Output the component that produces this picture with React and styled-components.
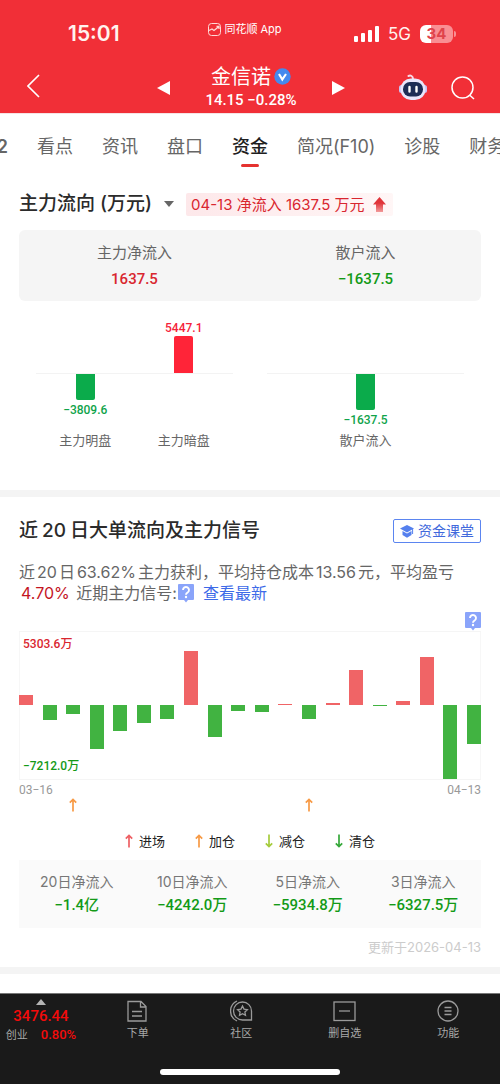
import React from "react";
import styled, { createGlobalStyle } from "styled-components";

const RED = "#f12f37";
const UP = "#d9262f";
const DOWN = "#139a17";
const LINK = "#4169dc";
const TEXT_FONT = `Inter, "Noto Sans CJK SC", sans-serif`;
const NUM_FONT = `Roboto, "Noto Sans CJK SC", sans-serif`;

const GlobalStyle = createGlobalStyle`
  * { box-sizing: border-box; }
  body { margin: 0; background: #fff; font-family: ${TEXT_FONT}; color: #2b2b2b; }
  button { font: inherit; color: inherit; background: none; border: 0; padding: 0; cursor: pointer; }
  h1, h2, p, dl, dd, ul { margin: 0; padding: 0; }
  ul { list-style: none; }
  a { text-decoration: none; color: inherit; }
  svg { display: block; flex: none; }
`;

const Page = styled.div`
  min-height: 100vh;
  display: flex;
  flex-direction: column;
  overflow-x: hidden;
`;

/* ---------- header ---------- */
const Header = styled.header`
  background: ${RED};
  color: #fff;
`;
const StatusBar = styled.div`
  display: grid;
  grid-template-columns: 1fr auto 1fr;
  align-items: center;
  height: 62px;
  padding: 6px 44px 0 34px;
`;
const Time = styled.time`
  padding-left: 34px;
  font-size: 21px;
  font-weight: 600;
  line-height: 26px;
  color: #fff3ee;
`;
const AppTag = styled.div`
  display: flex;
  align-items: center;
  gap: 3px;
  font-size: 11px;
  line-height: 16px;
  padding-bottom: 10px;
`;
const Signals = styled.div`
  display: flex;
  align-items: center;
  justify-content: flex-end;
  gap: 9px;
  font-size: 17px;
  line-height: 20px;
  color: #fff3ee;
`;
const Battery = styled.span`
  display: flex;
  align-items: center;
  gap: 1px;
  &::after {
    content: "";
    width: 2px;
    height: 6px;
    border-radius: 0 2px 2px 0;
    background: #f98f93;
  }
`;
const BatteryBody = styled.span`
  width: 33px;
  height: 18px;
  border-radius: 6px;
  background: linear-gradient(90deg, #fff 34%, #f98f93 34%);
  color: #e0434b;
  font-size: 15px;
  font-weight: 700;
  line-height: 18px;
  text-align: center;
`;
const TitleBar = styled.div`
  display: grid;
  grid-template-columns: 1fr auto 1fr;
  align-items: center;
  height: 51px;
  padding: 0 25px 0 27px;
`;
const Switcher = styled.div`
  display: flex;
  align-items: center;
  gap: 34px;
`;
const Stock = styled.div`
  display: flex;
  flex-direction: column;
  align-items: center;
`;
const StockName = styled.h1`
  display: flex;
  align-items: center;
  gap: 3px;
  font-size: 20px;
  font-weight: 400;
  line-height: 24px;
`;
const StockPrice = styled.p`
  font-family: ${NUM_FONT};
  font-size: 15px;
  font-weight: 500;
  line-height: 22px;
`;
const Actions = styled.div`
  display: flex;
  justify-content: flex-end;
  align-items: center;
  gap: 24px;
`;

/* ---------- tabs ---------- */
const Tabs = styled.nav`
  display: flex;
  justify-content: center;
  gap: 29px;
  padding: 20px 0 0 2px;
  height: 59px;
  overflow: hidden;
  border-top: 1px solid #f6e3e4;
`;
const Tab = styled.a`
  flex: none;
  display: flex;
  flex-direction: column;
  align-items: center;
  gap: 4px;
  font-size: 18px;
  line-height: 26px;
  font-weight: ${(p) => (p.$active ? 500 : 400)};
  color: ${(p) => (p.$active ? "#1f1f1f" : "#666")};
  &::after {
    content: "";
    width: 18px;
    height: 3px;
    border-radius: 2px;
    background: ${(p) => (p.$active ? "#e5322f" : "transparent")};
  }
`;
const EdgeTab = styled(Tab)`
  font-weight: 600;
  &::after { width: 0; }
`;

/* ---------- sections ---------- */
const Section = styled.section`
  padding: ${(p) => p.$pad} 19px 0;
`;
const Divider = styled.div`
  height: 7px;
  background: #f4f4f4;
`;
const HeadRow = styled.div`
  display: flex;
  align-items: center;
  justify-content: ${(p) => (p.$spread ? "space-between" : "flex-start")};
  height: 24px;
`;
const Heading = styled.h2`
  font-size: 19px;
  font-weight: 500;
  line-height: 24px;
  white-space: nowrap;
`;
const Num = styled.span`
  margin: 0 ${(p) => p.$gap || "2px"};
  color: ${(p) => p.$color || "inherit"};
`;
const UnitButton = styled.button`
  display: flex;
  align-items: center;
  gap: 7px;
`;
const FlowTag = styled.span`
  display: flex;
  align-items: center;
  gap: 8px;
  height: 23px;
  margin-left: 12px;
  padding: 0 7px 0 5px;
  border-radius: 2px;
  background: linear-gradient(90deg, #fde8ea, #fff6f6);
  color: ${UP};
  font-size: 15px;
  line-height: 23px;
  white-space: nowrap;
`;
const Card = styled.dl`
  display: grid;
  grid-template-columns: repeat(${(p) => p.$cols}, 1fr);
  text-align: center;
`;
const FlowCard = styled(Card)`
  margin-top: 14px;
  padding: 10px 0 9px;
  border-radius: 6px;
  background: #f5f5f5;
  dt { font-size: 15px; line-height: 26px; color: #666; }
  dd { line-height: 26px; }
`;
const SumCard = styled(Card)`
  margin-top: 9px;
  padding: 11px 0;
  background: #fafafa;
  dt { font-size: 14px; line-height: 22px; color: #777; }
  dd { line-height: 24px; }
`;
const Amount = styled.dd`
  font-family: ${NUM_FONT};
  font-size: 15px;
  font-weight: 500;
  color: ${(p) => (p.$up ? UP : DOWN)};
`;

/* ---------- split bar charts ---------- */
const Panels = styled.div`
  display: grid;
  grid-template-columns: 1fr 1fr;
  padding: 18px 0 40px;
`;
const Panel = styled.div`
  display: flex;
  padding: 0 17px;
`;
const Cell = styled.div`
  flex: 1;
  text-align: center;
  font-size: 13px;
  line-height: 20px;
  color: #666;
`;
const Half = styled.div`
  display: flex;
  flex-direction: column;
  align-items: center;
  justify-content: ${(p) => (p.$upper ? "flex-end" : "flex-start")};
  height: ${(p) => (p.$upper ? "55px" : "56px")};
  border-bottom: ${(p) => (p.$upper ? "1px solid #f3f3f3" : "0")};
  font-family: ${NUM_FONT};
  font-size: 12px;
  font-weight: 500;
  line-height: ${(p) => (p.$upper ? "16px" : "20px")};
  color: ${(p) => (p.$upper ? "#f5223a" : "#0fa34a")};
`;
const Block = styled.div`
  width: 19px;
  height: ${(p) => p.$h}px;
  border-radius: ${(p) => (p.$up ? "2px 2px 0 0" : "0 0 2px 2px")};
  background: ${(p) => (p.$up ? "#ff2438" : "#0bab4b")};
`;

/* ---------- 20-day chart ---------- */
const CourseButton = styled.button`
  display: flex;
  align-items: center;
  gap: 4px;
  height: 24px;
  padding: 0 6px;
  border: 1px solid #5b85f0;
  border-radius: 2px;
  color: ${LINK};
  font-size: 14px;
  line-height: 22px;
`;
const Summary = styled.p`
  margin-top: 19px;
  font-size: 16px;
  line-height: 21px;
  color: #666;
`;
const HelpButton = styled.button`
  vertical-align: top;
  margin: 0 9px 0 1px;
  padding-top: 1px;
`;
const TextLink = styled.a`
  color: #3d6ae8;
`;
const HelpRow = styled.div`
  display: flex;
  justify-content: flex-end;
  height: 19px;
  margin-top: 8px;
`;
const Plot = styled.div`
  position: relative;
  display: flex;
  justify-content: space-between;
  height: 149px;
  border: solid #f5f5f5;
  border-width: 1px 0;
  box-shadow: inset 1px 0 #f7f7f7, inset -1px 0 #f7f7f7;
`;
const Bar = styled.div.attrs((p) => ({
  style: { height: p.$h, marginTop: p.$top },
}))`
  width: 14px;
  background: ${(p) => (p.$up ? "#f06466" : "#41b341")};
`;
const Limit = styled.span`
  position: absolute;
  left: 4px;
  ${(p) => (p.$up ? "top: 3px" : "bottom: 4px")};
  font-family: ${NUM_FONT};
  font-size: 12px;
  font-weight: 500;
  line-height: 18px;
  color: ${(p) => (p.$up ? UP : DOWN)};
`;
const Dates = styled.div`
  display: flex;
  justify-content: space-between;
  padding-top: 2px;
  font-family: ${NUM_FONT};
  font-size: 12px;
  line-height: 16px;
  color: #999;
`;
const Markers = styled.div`
  display: flex;
  justify-content: space-between;
  height: 14px;
`;
const Marker = styled.span`
  display: flex;
  justify-content: center;
  width: 14px;
`;
const Legend = styled.ul`
  display: flex;
  justify-content: center;
  gap: 30px;
  margin-top: 19px;
  font-size: 13px;
  line-height: 20px;
  color: #222;
  li { display: flex; align-items: center; gap: 6px; }
`;
const Updated = styled.p`
  padding: 9px 0 10px;
  text-align: right;
  font-size: 13px;
  line-height: 20px;
  color: #ccc;
`;

/* ---------- bottom bar ---------- */
const Footer = styled.footer`
  margin-top: auto;
  background: #1a1a1a;
  border-top: 1px solid #777;
  color: #a8a8a8;
`;
const FooterRow = styled.div`
  display: flex;
  height: 75px;
  padding-top: 5px;
`;
const IndexBox = styled.button`
  width: 82px;
  height: 46px;
  display: flex;
  flex-direction: column;
  align-items: center;
`;
const IndexValue = styled.span`
  font-family: ${NUM_FONT};
  font-size: 15px;
  font-weight: 500;
  line-height: 22px;
  color: #f40b0b;
`;
const IndexLine = styled.span`
  display: flex;
  gap: 13px;
  font-size: 11px;
  line-height: 16px;
`;
const IndexChange = styled.span`
  font-family: ${NUM_FONT};
  font-size: 13px;
  font-weight: 500;
  color: #f40b0b;
`;
const FooterNav = styled.nav`
  flex: 1;
  display: grid;
  grid-template-columns: repeat(4, 1fr);
  padding: 1px 0 0 4px;
`;
const FooterItem = styled.button`
  display: flex;
  flex-direction: column;
  align-items: center;
  gap: 2px;
  height: 41px;
  font-size: 11px;
  line-height: 16px;
`;
const HomeIndicator = styled.div`
  width: 36%;
  height: 6px;
  margin: 0 auto 9px;
  border-radius: 3px;
  background: #fff;
`;

/* ---------- icons ---------- */
const Arrow = ({ color, down }) => (
  <svg width="8" height="14" viewBox="0 0 8 14" fill="none" stroke={color} strokeWidth="1.7">
    {down ? <path d="M4 .5v12M.8 9.400L4 12.600l3.200-3.200" /> : <path d="M4 13.500v-12M.8 4.600L4 1.400l3.200 3.200" />}
  </svg>
);
const HelpIcon = () => (
  <svg width="16" height="19" viewBox="0 0 16 19">
    <path d="M1 0h14a1 1 0 0 1 1 1v14a1 1 0 0 1-1 1h-5l-2 2.500L6 16H1a1 1 0 0 1-1-1V1a1 1 0 0 1 1-1z" fill="#8aa4fa" />
    <path d="M5 6a3 3 0 1 1 4.600 2.500C8.400 9.200 8 9.600 8 10.700" fill="none" stroke="#fff" strokeWidth="1.900" />
    <circle cx="8" cy="13" r="1.200" fill="#fff" />
  </svg>
);
const Triangle = ({ right }) => (
  <svg width="14" height="14" viewBox="0 0 14 14" fill="#fff">
    <path d={right ? "M1 0v14l13-7z" : "M13 0v14L0 7z"} />
  </svg>
);
const Robot = () => (
  <svg width="28" height="27" viewBox="0 0 28 27">
    <path d="M9.500 2c2-1 4.500 0 4.500 3" fill="none" stroke="#f9d9e6" strokeWidth="2" strokeLinecap="round" />
    <rect x="0" y="11" width="5" height="8" rx="2.500" fill="#c9c3f5" />
    <rect x="23" y="11" width="5" height="8" rx="2.500" fill="#c9c3f5" />
    <rect x="1.500" y="4.500" width="25" height="21.500" rx="10.500" fill="#e9e6fb" />
    <rect x="4" y="8" width="20" height="14.500" rx="7" fill="#1d2c55" />
    <path d="M10.500 13v4.500M17.500 13v4.500" stroke="#fff" strokeWidth="2.400" strokeLinecap="round" />
  </svg>
);

const tabs = ["看点", "资讯", "盘口", "资金", "简况(F10)", "诊股", "财务"];

const days = [
  950, -1490, -830, -4320, -2530, -1750, -1360, 5303.6, -3140, -600,
  -640, 60, -1360, 150, 3450, -50, 430, 4720, -7212, -3800,
];
const ZERO = 73;
const PX_PER_UNIT = 74 / 7212;
const addDays = [2, 12];

const legend = [
  { name: "进场", color: "#ee6064" },
  { name: "加仓", color: "#f79a45" },
  { name: "减仓", color: "#a5cc3c", down: true },
  { name: "清仓", color: "#36a83a", down: true },
];

const totals = [
  ["20日净流入", "−1.4亿"],
  ["10日净流入", "−4242.0万"],
  ["5日净流入", "−5934.8万"],
  ["3日净流入", "−6327.5万"],
];

const line = { fill: "none", stroke: "#9a9a9a", strokeWidth: 1.3 };
const footerItems = [
  ["下单", <g {...line}><path d="M2 1.500h13l5 5v14.500H2z M14.500 1.500v5.500H20 M6 11.500h10M6 16h10" /></g>],
  ["社区", <g {...line}><path d="M18 20H12.500A9 9 0 1 1 21.500 11v9z" /><path d="M7 1A11 11 0 0 0 7 21" /><path d="M12.500 6l1.500 3.100 3.400.5-2.500 2.400.6 3.400-3-1.600-3 1.600.6-3.400-2.500-2.400 3.400-.5z" /></g>],
  ["删自选", <g {...line}><rect x="1" y="2" width="21" height="18.500" /><path d="M6 11h11" /></g>],
  ["功能", <g {...line}><circle cx="11" cy="11" r="10" /><path d="M7.500 7.500h7M7.500 11h7M7.500 14.500h7" /></g>],
];

function Column({ label, value, up, h }) {
  return (
    <Cell>
      <Half $upper>{up && <><span>{value}</span><Block $up $h={h} /></>}</Half>
      <Half>{!up && <><Block $h={h} /><span>{value}</span></>}</Half>
      {label}
    </Cell>
  );
}

export default function App() {
  return (
    <Page>
      <GlobalStyle />
      <Header>
        <StatusBar>
          <Time>15:01</Time>
          <AppTag>
            <svg width="13" height="13" viewBox="0 0 13 13" fill="none" stroke="#ffd9d6" strokeWidth="1">
              <rect x=".5" y=".5" width="12" height="12" rx="3" />
              <path d="M1 7.500l3-1.500 2 1.500 5-4M8.500 3.500H11v2.500" strokeWidth="1.300" />
            </svg>
            同花顺 App
          </AppTag>
          <Signals>
            <svg width="25" height="16" viewBox="0 0 25 16" fill="#fff">
              <rect x="0" y="10" width="4" height="6" rx="1" />
              <rect x="7" y="7" width="4" height="9" rx="1" />
              <rect x="14" y="4" width="4" height="12" rx="1" />
              <rect x="21" y="0" width="4" height="16" rx="1" />
            </svg>
            5G
            <Battery><BatteryBody>34</BatteryBody></Battery>
          </Signals>
        </StatusBar>
        <TitleBar>
          <div>
            <button aria-label="返回">
              <svg width="13" height="24" viewBox="0 0 13 24" fill="none" stroke="#fff" strokeWidth="1.600">
                <path d="M12 1L1 12l11 11" />
              </svg>
            </button>
          </div>
          <Switcher>
            <button aria-label="上一只"><Triangle /></button>
            <Stock>
              <StockName>
                金信诺
                <svg width="17" height="17" viewBox="0 0 17 17">
                  <circle cx="8.500" cy="8.500" r="8.200" fill="#4489ee" />
                  <path d="M5 6l3.300 5.500L12 6" fill="none" stroke="#fff" strokeWidth="2.200" />
                </svg>
              </StockName>
              <StockPrice>14.15 −0.28%</StockPrice>
            </Stock>
            <button aria-label="下一只"><Triangle right /></button>
          </Switcher>
          <Actions>
            <button aria-label="智能助手"><Robot /></button>
            <button aria-label="搜索">
              <svg width="24" height="24" viewBox="0 0 24 24" fill="none" stroke="#fff" strokeWidth="1.500">
                <circle cx="11.500" cy="11.500" r="10.500" />
                <path d="M18.500 19l4.500 4" />
              </svg>
            </button>
          </Actions>
        </TitleBar>
      </Header>

      <Tabs>
        <EdgeTab href="#l2">2</EdgeTab>
        {tabs.map((t) => (
          <Tab key={t} href={`#${t}`} $active={t === "资金"}>{t}</Tab>
        ))}
      </Tabs>

      <Section $pad="20px">
        <HeadRow>
          <Heading>
            <UnitButton>
              <span>主力流向<Num $gap="5px">(万元)</Num></span>
              <svg width="10" height="6" viewBox="0 0 10 6" fill="#666"><path d="M0 0h10L5 6z" /></svg>
            </UnitButton>
          </Heading>
          <FlowTag>
            04-13 净流入 1637.5 万元
            <svg width="13" height="15" viewBox="0 0 13 15">
              <defs>
                <linearGradient id="rise" x1="0" y1="0" x2="0" y2="1">
                  <stop offset=".4" stopColor="#e0343a" />
                  <stop offset="1" stopColor="#f29a9a" />
                </linearGradient>
              </defs>
              <path d="M6.500 0L13 7.500H10V15H3V7.500H0z" fill="url(#rise)" />
            </svg>
          </FlowTag>
        </HeadRow>
        <FlowCard $cols={2}>
          <div><dt>主力净流入</dt><Amount $up>1637.5</Amount></div>
          <div><dt>散户流入</dt><Amount>−1637.5</Amount></div>
        </FlowCard>
        <Panels>
          <Panel>
            <Column label="主力明盘" value="−3809.6" h={26} />
            <Column label="主力暗盘" value="5447.1" up h={37} />
          </Panel>
          <Panel>
            <Column label="散户流入" value="−1637.5" h={37} />
          </Panel>
        </Panels>
      </Section>

      <Divider />

      <Section $pad="22px">
        <HeadRow $spread>
          <Heading>近<Num $gap="4px">20</Num>日大单流向及主力信号</Heading>
          <CourseButton>
            <svg width="14" height="13" viewBox="0 0 14 13" fill="#5580ee">
              <path d="M7 0l7 3.500L7 7.500 0 3.500z" />
              <path d="M2.500 6L7 8.500 11.500 6v4L7 12.800 2.500 10z" />
              <path d="M12.600 4v5" stroke="#5580ee" />
            </svg>
            资金课堂
          </CourseButton>
        </HeadRow>
        <Summary>
          近<Num>20</Num>日<Num>63.62%</Num>主力获利，平均持仓成本<Num>13.56</Num>元，平均盈亏
          <Num $color="#c4141f">4.70%</Num> 近期主力信号:
          <HelpButton aria-label="信号说明"><HelpIcon /></HelpButton>
          <TextLink href="#latest">查看最新</TextLink>
        </Summary>
        <HelpRow><button aria-label="图表说明"><HelpIcon /></button></HelpRow>
        <Plot>
          {days.map((v, i) => {
            const h = Math.max(1, Math.round(Math.abs(v) * PX_PER_UNIT));
            return <Bar key={i} $up={v > 0} $h={h} $top={v > 0 ? ZERO - h : ZERO} />;
          })}
          <Limit $up>5303.6万</Limit>
          <Limit>−7212.0万</Limit>
        </Plot>
        <Dates><span>03−16</span><span>04−13</span></Dates>
        <Markers>
          {days.map((_, i) => (
            <Marker key={i}>{addDays.includes(i) && <Arrow color="#f79a45" />}</Marker>
          ))}
        </Markers>
        <Legend>
          {legend.map((l) => (
            <li key={l.name}><Arrow color={l.color} down={l.down} />{l.name}</li>
          ))}
        </Legend>
        <SumCard $cols={4}>
          {totals.map(([k, v]) => (
            <div key={k}><dt>{k}</dt><Amount>{v}</Amount></div>
          ))}
        </SumCard>
        <Updated>更新于2026-04-13</Updated>
      </Section>

      <Divider />

      <Footer>
        <FooterRow>
          <IndexBox>
            <svg width="10" height="6" viewBox="0 0 10 6" fill="#b5b5b5"><path d="M5 0l5 6H0z" /></svg>
            <IndexValue>3476.44</IndexValue>
            <IndexLine>创业 <IndexChange>0.80%</IndexChange></IndexLine>
          </IndexBox>
          <FooterNav>
            {footerItems.map(([name, icon]) => (
              <FooterItem key={name}>
                <svg width="23" height="23" viewBox="0 0 23 23">{icon}</svg>
                {name}
              </FooterItem>
            ))}
          </FooterNav>
        </FooterRow>
        <HomeIndicator />
      </Footer>
    </Page>
  );
}
